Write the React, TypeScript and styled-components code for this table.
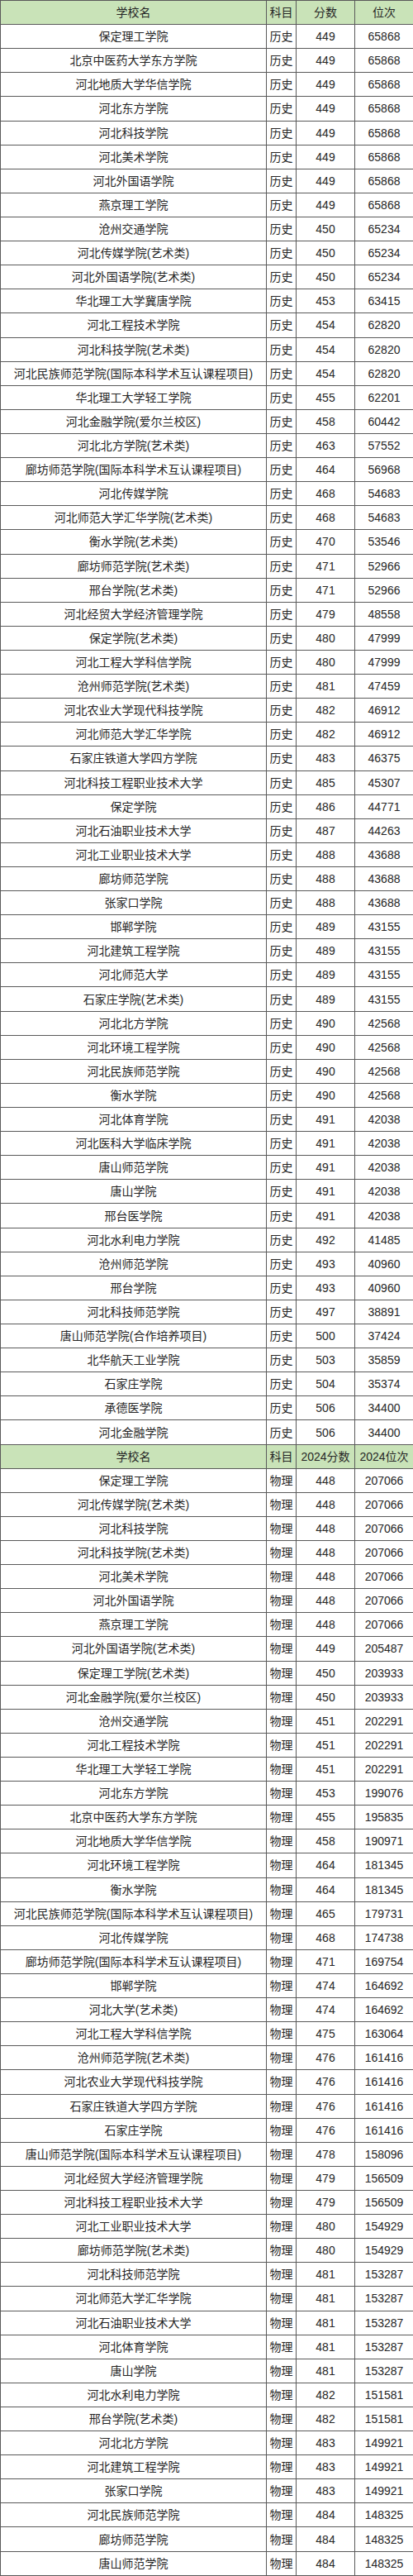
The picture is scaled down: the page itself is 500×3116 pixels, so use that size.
import React from 'react';
import styled, { createGlobalStyle } from 'styled-components';

type Row = [string, number, number];

const history: Row[] = [
  ['保定理工学院', 449, 65868],
  ['北京中医药大学东方学院', 449, 65868],
  ['河北地质大学华信学院', 449, 65868],
  ['河北东方学院', 449, 65868],
  ['河北科技学院', 449, 65868],
  ['河北美术学院', 449, 65868],
  ['河北外国语学院', 449, 65868],
  ['燕京理工学院', 449, 65868],
  ['沧州交通学院', 450, 65234],
  ['河北传媒学院(艺术类)', 450, 65234],
  ['河北外国语学院(艺术类)', 450, 65234],
  ['华北理工大学冀唐学院', 453, 63415],
  ['河北工程技术学院', 454, 62820],
  ['河北科技学院(艺术类)', 454, 62820],
  ['河北民族师范学院(国际本科学术互认课程项目)', 454, 62820],
  ['华北理工大学轻工学院', 455, 62201],
  ['河北金融学院(爱尔兰校区)', 458, 60442],
  ['河北北方学院(艺术类)', 463, 57552],
  ['廊坊师范学院(国际本科学术互认课程项目)', 464, 56968],
  ['河北传媒学院', 468, 54683],
  ['河北师范大学汇华学院(艺术类)', 468, 54683],
  ['衡水学院(艺术类)', 470, 53546],
  ['廊坊师范学院(艺术类)', 471, 52966],
  ['邢台学院(艺术类)', 471, 52966],
  ['河北经贸大学经济管理学院', 479, 48558],
  ['保定学院(艺术类)', 480, 47999],
  ['河北工程大学科信学院', 480, 47999],
  ['沧州师范学院(艺术类)', 481, 47459],
  ['河北农业大学现代科技学院', 482, 46912],
  ['河北师范大学汇华学院', 482, 46912],
  ['石家庄铁道大学四方学院', 483, 46375],
  ['河北科技工程职业技术大学', 485, 45307],
  ['保定学院', 486, 44771],
  ['河北石油职业技术大学', 487, 44263],
  ['河北工业职业技术大学', 488, 43688],
  ['廊坊师范学院', 488, 43688],
  ['张家口学院', 488, 43688],
  ['邯郸学院', 489, 43155],
  ['河北建筑工程学院', 489, 43155],
  ['河北师范大学', 489, 43155],
  ['石家庄学院(艺术类)', 489, 43155],
  ['河北北方学院', 490, 42568],
  ['河北环境工程学院', 490, 42568],
  ['河北民族师范学院', 490, 42568],
  ['衡水学院', 490, 42568],
  ['河北体育学院', 491, 42038],
  ['河北医科大学临床学院', 491, 42038],
  ['唐山师范学院', 491, 42038],
  ['唐山学院', 491, 42038],
  ['邢台医学院', 491, 42038],
  ['河北水利电力学院', 492, 41485],
  ['沧州师范学院', 493, 40960],
  ['邢台学院', 493, 40960],
  ['河北科技师范学院', 497, 38891],
  ['唐山师范学院(合作培养项目)', 500, 37424],
  ['北华航天工业学院', 503, 35859],
  ['石家庄学院', 504, 35374],
  ['承德医学院', 506, 34400],
  ['河北金融学院', 506, 34400],
];

const physics: Row[] = [
  ['保定理工学院', 448, 207066],
  ['河北传媒学院(艺术类)', 448, 207066],
  ['河北科技学院', 448, 207066],
  ['河北科技学院(艺术类)', 448, 207066],
  ['河北美术学院', 448, 207066],
  ['河北外国语学院', 448, 207066],
  ['燕京理工学院', 448, 207066],
  ['河北外国语学院(艺术类)', 449, 205487],
  ['保定理工学院(艺术类)', 450, 203933],
  ['河北金融学院(爱尔兰校区)', 450, 203933],
  ['沧州交通学院', 451, 202291],
  ['河北工程技术学院', 451, 202291],
  ['华北理工大学轻工学院', 451, 202291],
  ['河北东方学院', 453, 199076],
  ['北京中医药大学东方学院', 455, 195835],
  ['河北地质大学华信学院', 458, 190971],
  ['河北环境工程学院', 464, 181345],
  ['衡水学院', 464, 181345],
  ['河北民族师范学院(国际本科学术互认课程项目)', 465, 179731],
  ['河北传媒学院', 468, 174738],
  ['廊坊师范学院(国际本科学术互认课程项目)', 471, 169754],
  ['邯郸学院', 474, 164692],
  ['河北大学(艺术类)', 474, 164692],
  ['河北工程大学科信学院', 475, 163064],
  ['沧州师范学院(艺术类)', 476, 161416],
  ['河北农业大学现代科技学院', 476, 161416],
  ['石家庄铁道大学四方学院', 476, 161416],
  ['石家庄学院', 476, 161416],
  ['唐山师范学院(国际本科学术互认课程项目)', 478, 158096],
  ['河北经贸大学经济管理学院', 479, 156509],
  ['河北科技工程职业技术大学', 479, 156509],
  ['河北工业职业技术大学', 480, 154929],
  ['廊坊师范学院(艺术类)', 480, 154929],
  ['河北科技师范学院', 481, 153287],
  ['河北师范大学汇华学院', 481, 153287],
  ['河北石油职业技术大学', 481, 153287],
  ['河北体育学院', 481, 153287],
  ['唐山学院', 481, 153287],
  ['河北水利电力学院', 482, 151581],
  ['邢台学院(艺术类)', 482, 151581],
  ['河北北方学院', 483, 149921],
  ['河北建筑工程学院', 483, 149921],
  ['张家口学院', 483, 149921],
  ['河北民族师范学院', 484, 148325],
  ['廊坊师范学院', 484, 148325],
  ['唐山师范学院', 484, 148325],
];

const GlobalStyle = createGlobalStyle`
  body {
    margin: 0;
    background: #fff;
  }
`;

const Table = styled.table`
  width: 500px;
  border-collapse: collapse;
  table-layout: fixed;
  font-family: 'Liberation Sans', 'Noto Sans CJK SC', sans-serif;
  font-size: 14px;
  color: #262626;
`;

const Tr = styled.tr<{ $head?: boolean }>`
  height: 29.12px;
  background: ${(p) => (p.$head ? '#c9e3b8' : '#fff')};
`;

const Td = styled.td`
  border: 1px solid #5a5a5a;
  padding: 0;
  text-align: center;
  vertical-align: middle;
  white-space: nowrap;
  overflow: hidden;
  line-height: 1;
`;

const Section = ({ rows, subject, head }: { rows: Row[]; subject: string; head: string[] }) => (
  <>
    <Tr $head>
      {head.map((h, i) => (
        <Td key={i}>{h}</Td>
      ))}
    </Tr>
    {rows.map((r, i) => (
      <Tr key={i}>
        <Td>{r[0]}</Td>
        <Td>{subject}</Td>
        <Td>{r[1]}</Td>
        <Td>{r[2]}</Td>
      </Tr>
    ))}
  </>
);

export default function App() {
  return (
    <>
      <GlobalStyle />
      <Table>
        <colgroup>
          <col style={{ width: 322 }} />
          <col style={{ width: 36 }} />
          <col style={{ width: 71 }} />
          <col style={{ width: 71 }} />
        </colgroup>
        <tbody>
          <Section rows={history} subject='历史' head={['学校名', '科目', '分数', '位次']} />
          <Section rows={physics} subject='物理' head={['学校名', '科目', '2024分数', '2024位次']} />
        </tbody>
      </Table>
    </>
  );
}
